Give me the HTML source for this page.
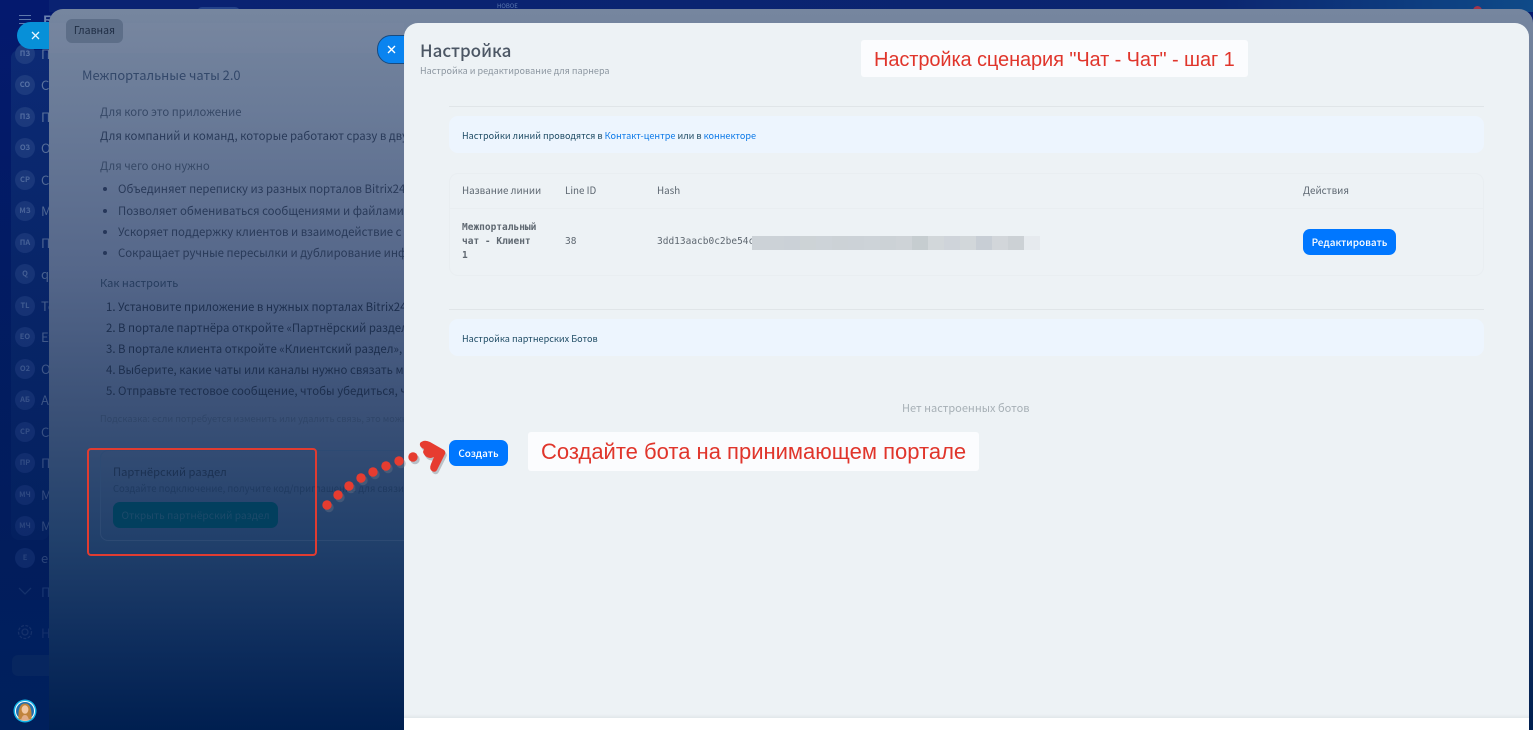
<!DOCTYPE html>
<html lang="ru"><head><meta charset="utf-8"><title>Настройка</title>
<style>
*{box-sizing:border-box}
html,body{margin:0;padding:0;width:1533px;height:730px;overflow:hidden;background:#001f5c}
body{position:relative;font-family:"Noto Sans CJK SC","Liberation Sans",sans-serif}
.a{position:absolute;white-space:nowrap;line-height:1}
#bg{position:absolute;left:0;top:0;width:1533px;height:730px;background:linear-gradient(180deg,#04196e 0,#011c62 400px,#00205c 730px)}
#tb{position:absolute;left:49px;top:0;width:1484px;height:12px;background:linear-gradient(90deg,#0a2272,#0b2570 78%,#0f4a88)}
#side{position:absolute;left:11px;top:50px;width:38px;height:490px;background:linear-gradient(180deg,#0c2a75,#072665);border-radius:8px}
#sov{position:absolute;left:0;top:40px;width:49px;height:560px;background:linear-gradient(180deg,rgba(2,28,90,0),rgba(2,28,90,.62))}
.c{position:absolute;left:15px;width:20px;height:20px;border-radius:50%;background:#1e3c80;color:#5a75a8;font-size:7.5px;font-weight:700;text-align:center;line-height:20px}
.st{position:absolute;left:41px;color:#60779f;font-size:13px;line-height:1;white-space:nowrap}
#p1{position:absolute;left:49px;top:9px;width:1484px;height:721px;border-radius:14px 14px 0 0;background:linear-gradient(180deg,#76869f 0,#6a7b98 100px,#55678a 260px,#3b5177 400px,#21406b 530px,#0d2c5c 640px,#001f50 721px)}
#hb{position:absolute;left:49px;top:23px;width:355px;height:30px;background:rgba(125,140,165,.18)}
.t{color:#293a59;font-size:11.4px}
.l{color:#1c2e4d;font-size:11.4px}
.h{color:#364866;font-size:11.3px}
.b{position:absolute;left:103px;width:4px;height:4px;border-radius:50%;background:#26375a}
#p2{position:absolute;left:404px;top:23px;width:1125px;height:695px;background:#edf2f5;border-radius:14px 14px 0 0;box-shadow:inset 0 -3px 2px -1px #e2e7ea}
#w{position:absolute;left:404px;top:718px;width:1125px;height:12px;background:#fff}
.box{position:absolute;left:449px;width:1035px;height:37px;background:#edf5fe;border-radius:9px}
.hr{position:absolute;left:449px;width:1035px;height:1px;background:#e0e5e8}
.s{font-size:9.1px;color:#1d4a63}
.btn{position:absolute;background:#0077ff;border-radius:7px;color:#fff;font-size:10px;font-weight:500;text-align:center;line-height:26px}
.th{font-size:9.8px;color:#5c6670}
.m{font-family:"DejaVu Sans Mono","Liberation Mono",monospace;font-size:9.5px;color:#5f6871}
.note{position:absolute;background:#fbfcfe;border-radius:3px;color:#e0352b;font-family:"Liberation Sans",sans-serif;white-space:nowrap}
#blur{position:absolute;left:752px;top:236px;height:14px;display:flex}
#blur i{display:block;width:16px;height:14px}
</style></head><body>
<div id="bg"></div><div id="tb"></div>
<div class="a" style="left:1473px;top:6px;width:9px;height:9px;border-radius:50%;background:#a5344a"></div>
<div class="a" style="left:197px;top:7px;width:43px;height:10px;border-radius:5px;background:#24428a"></div>
<div class="a" style="left:497px;top:3px;color:#5c7ab0;font-size:6px">НОВОЕ</div>
<div class="a" style="left:19px;top:15px;width:12px;height:1px;background:#5f78ab;box-shadow:0 4px 0 #5f78ab,0 8px 0 #5f78ab"></div>
<div class="a" style="left:43px;top:13px;color:#6b82b0;font-size:13px;font-weight:700">Б</div>
<div id="side"></div>
<div class="c" style="top:44px">ПЗ</div><div class="st" style="top:47px">П</div>
<div class="c" style="top:75px">СО</div><div class="st" style="top:78px">С</div>
<div class="c" style="top:107px">ПЗ</div><div class="st" style="top:110px">П</div>
<div class="c" style="top:138px">ОЗ</div><div class="st" style="top:141px">О</div>
<div class="c" style="top:170px">СР</div><div class="st" style="top:173px">С</div>
<div class="c" style="top:201px">МЗ</div><div class="st" style="top:204px">М</div>
<div class="c" style="top:233px">ПА</div><div class="st" style="top:236px">П</div>
<div class="c" style="top:264px">Q</div><div class="st" style="top:267px">qu</div>
<div class="c" style="top:296px">TL</div><div class="st" style="top:299px">Te</div>
<div class="c" style="top:327px">ЕО</div><div class="st" style="top:330px">Ex</div>
<div class="c" style="top:359px">О2</div><div class="st" style="top:362px">О</div>
<div class="c" style="top:390px">АБ</div><div class="st" style="top:393px">А</div>
<div class="c" style="top:422px">СР</div><div class="st" style="top:425px">С</div>
<div class="c" style="top:453px">ПР</div><div class="st" style="top:456px">П</div>
<div class="c" style="top:485px">МЧ</div><div class="st" style="top:488px">М</div>
<div class="c" style="top:516px">МЧ</div><div class="st" style="top:519px">М</div>
<div class="c" style="top:548px">E</div><div class="st" style="top:551px">e</div>
<div id="sov"></div>
<svg class="a" style="left:15px;top:584px" width="34" height="60" viewBox="0 0 34 60" fill="none" stroke="#14306a" stroke-width="1.3"><path d="M4 4l6 6 6-6"/><circle cx="10" cy="48" r="3"/><circle cx="10" cy="48" r="6.5" stroke-dasharray="3 1.4"/></svg>
<div class="st" style="top:585px;color:#1a3670">П</div><div class="st" style="top:626px;color:#14306a">Н</div>
<div class="a" style="left:12px;top:655px;width:37px;height:21px;border-radius:6px 0 0 6px;background:#07265f"></div>
<svg class="a" style="left:13px;top:699px" width="24" height="24" viewBox="0 0 24 24"><circle cx="12" cy="12" r="11.5" fill="#12b4e8"/><circle cx="12" cy="12" r="10" fill="#fff"/><circle cx="12" cy="12" r="9" fill="#1d6fb0"/><path d="M5.500 20C5 11 6.500 4.500 12 4.500S19 11 18.500 20C15 21.500 9 21.500 5.500 20z" fill="#c0843c"/><ellipse cx="12" cy="10.500" rx="3.400" ry="4.300" fill="#f1c8a4"/><path d="M8 21c1-3.500 2-5 4-5s3 1.500 4 5c-2 1-6 1-8 0z" fill="#e0ac88"/></svg>
<div class="a" style="left:17px;top:22px;width:40px;height:27px;border-radius:14px 0 0 14px;background:#0790d8"></div>
<svg class="a" style="left:30px;top:30px" width="11" height="11" viewBox="0 0 11 11" stroke="#e8f6ff" stroke-width="1.300"><path d="M2 2l7 7M9 2l-7 7"/></svg>

<div id="p1"></div><div id="hb"></div>
<div class="a" style="left:66px;top:19px;width:57px;height:24px;border-radius:6px;background:#5d6e88;color:#1f2d44;font-size:10.5px;line-height:24px;text-align:center">Главная</div>
<div class="a" style="left:82px;top:69px;color:#33486a;font-size:12.9px">Межпортальные чаты 2.0</div>
<div class="a h" style="left:100px;top:107px">Для кого это приложение</div>
<div class="a t" style="left:100px;top:131px">Для компаний и команд, которые работают сразу в двух порталах</div>
<div class="a h" style="left:100px;top:161px">Для чего оно нужно</div>
<div class="b" style="top:187px"></div><div class="a t" style="left:118px;top:184px">Объединяет переписку из разных порталов Bitrix24</div>
<div class="b" style="top:209px"></div><div class="a t" style="left:118px;top:206px">Позволяет обмениваться сообщениями и файлами между</div>
<div class="b" style="top:230px"></div><div class="a t" style="left:118px;top:227px">Ускоряет поддержку клиентов и взаимодействие с партнёрами</div>
<div class="b" style="top:251px"></div><div class="a t" style="left:118px;top:248px">Сокращает ручные пересылки и дублирование информации</div>
<div class="a h" style="left:100px;top:278px;color:#263c5e;font-size:11px">Как настроить</div>
<div class="a l" style="left:106px;top:302px">1.</div><div class="a l" style="left:118px;top:302px">Установите приложение в нужных порталах Bitrix24</div>
<div class="a l" style="left:106px;top:323px">2.</div><div class="a l" style="left:118px;top:323px">В портале партнёра откройте «Партнёрский раздел»</div>
<div class="a l" style="left:106px;top:344px">3.</div><div class="a l" style="left:118px;top:344px">В портале клиента откройте «Клиентский раздел», введите</div>
<div class="a l" style="left:106px;top:365px">4.</div><div class="a l" style="left:118px;top:365px">Выберите, какие чаты или каналы нужно связать между</div>
<div class="a l" style="left:106px;top:386px">5.</div><div class="a l" style="left:118px;top:386px">Отправьте тестовое сообщение, чтобы убедиться, что</div>
<div class="a" style="left:100px;top:414px;color:#2f4568;font-size:9.2px">Подсказка: если потребуется изменить или удалить связь, это можно</div>
<div class="a" style="left:100px;top:450px;width:320px;height:91px;border:1px solid #2d4a73;border-radius:8px"></div>
<div class="a" style="left:113px;top:467px;color:#1b3152;font-size:11.2px">Партнёрский раздел</div>
<div class="a" style="left:113px;top:484px;color:#1f3a60;font-size:9.5px">Создайте подключение, получите код/приглашение для связи и</div>
<div class="a" style="left:113px;top:502px;width:165px;height:26px;border-radius:7px;background:#023f5e;color:#1c4a6a;font-size:10.2px;line-height:25px;text-align:center">Открыть партнёрский раздел</div>
<div class="a" style="left:87px;top:448px;width:230px;height:108px;border:2.700px solid #e03c31;border-radius:4px"></div>
<div class="a" style="left:377px;top:35px;width:40px;height:29px;border-radius:14px 0 0 14px;background:#0a84f0;border:1px solid #174a80"></div>
<svg class="a" style="left:386px;top:44px" width="11" height="11" viewBox="0 0 11 11" stroke="#fff" stroke-width="1.400"><path d="M2 2l7 7M9 2l-7 7"/></svg>

<div id="p2"></div><div id="w"></div>
<div class="a" style="left:420px;top:41px;color:#4b5664;font-size:17px;font-weight:500">Настройка</div>
<div class="a" style="left:420px;top:66px;color:#8c96a0;font-size:9.07px">Настройка и редактирование для парнера</div>
<div class="note" style="left:861px;top:40px;width:387px;height:37px;padding-left:13px;font-size:20px;line-height:40px;letter-spacing:-.1px">Настройка сценария "Чат - Чат" - шаг 1</div>
<div class="hr" style="top:106px"></div>
<div class="box" style="top:116px"></div>
<div class="a s" style="left:462px;top:131px">Настройки линий проводятся в <span style="color:#0a78e8">Контакт-центре</span> или в <span style="color:#0a78e8">коннекторе</span></div>
<div class="a" style="left:449px;top:173px;width:1035px;height:103px;border:1px solid #e9eef1;border-radius:9px"></div>
<div class="hr" style="top:208px;background:#e9eef1"></div>
<div class="a th" style="left:462px;top:186px">Название линии</div>
<div class="a th" style="left:565px;top:186px">Line ID</div>
<div class="a th" style="left:657px;top:186px">Hash</div>
<div class="a th" style="left:1303px;top:186px">Действия</div>
<div class="a m" style="left:462px;top:223px;font-weight:700">Межпортальный</div>
<div class="a m" style="left:462px;top:237px;font-weight:700">чат - Клиент</div>
<div class="a m" style="left:462px;top:251px;font-weight:700">1</div>
<div class="a m" style="left:565px;top:237px">38</div>
<div class="a m" style="left:657px;top:237px">3dd13aacb0c2be54c</div>
<div id="blur"><i style="background:#ccd2d7"></i><i style="background:#ccd2d7"></i><i style="background:#cbd1d7"></i><i style="background:#cdd3d6"></i><i style="background:#cdd3d8"></i><i style="background:#ccd2d6"></i><i style="background:#ccd2d7"></i><i style="background:#cdd3d8"></i><i style="background:#ccd2d6"></i><i style="background:#ced3d7"></i><i style="background:#c6cdd0"></i><i style="background:#d2d7da"></i><i style="background:#cfd4da"></i><i style="background:#d2d7da"></i><i style="background:#c8ced5"></i><i style="background:#d2d6da"></i><i style="background:#ccd1d5"></i><i style="background:#e6eaee"></i></div>
<div class="btn" style="left:1303px;top:229px;width:93px;height:26px">Редактировать</div>
<div class="hr" style="top:309px"></div>
<div class="box" style="top:319px"></div>
<div class="a s" style="left:462px;top:334px">Настройка партнерских Ботов</div>
<div class="a" style="left:902px;top:403px;color:#a7b0b6;font-size:11px">Нет настроенных ботов</div>
<div class="btn" style="left:449px;top:440px;width:59px;height:26px;line-height:25px">Создать</div>
<div class="note" style="left:528px;top:432px;width:451px;height:39px;padding-left:13px;font-size:22px;line-height:40px">Создайте бота на принимающем портале</div>

<svg class="a" style="left:0;top:0;pointer-events:none" width="1533" height="730" viewBox="0 0 1533 730">
<defs><path id="hd" d="M420 443Q424 439 430 442L444 450Q446 452 445 454L437 470Q435 473 432 471Q429 469 431 464L434 457L431 458Q425 458 423 452L424 449Q419 447 420 443Z"/></defs>
<g fill="#6b7686" opacity=".4" transform="translate(2 2.500)"><circle cx="327" cy="505" r="4.700"/><circle cx="338" cy="495" r="4.700"/><circle cx="349" cy="486" r="4.700"/><circle cx="361" cy="478" r="4.700"/><circle cx="373" cy="472" r="4.700"/><circle cx="386" cy="466" r="4.700"/><circle cx="399" cy="461" r="4.700"/><circle cx="413" cy="457" r="4.700"/></g>
<use href="#hd" fill="#9aa1a8" opacity=".6" transform="translate(1.500 2.500)"/>
<g fill="#e63c30"><circle cx="327" cy="505" r="4.700"/><circle cx="338" cy="495" r="4.700"/><circle cx="349" cy="486" r="4.700"/><circle cx="361" cy="478" r="4.700"/><circle cx="373" cy="472" r="4.700"/><circle cx="386" cy="466" r="4.700"/><circle cx="399" cy="461" r="4.700"/><circle cx="413" cy="457" r="4.700"/></g>
<use href="#hd" fill="#e63c30"/>
</svg>
</body></html>
